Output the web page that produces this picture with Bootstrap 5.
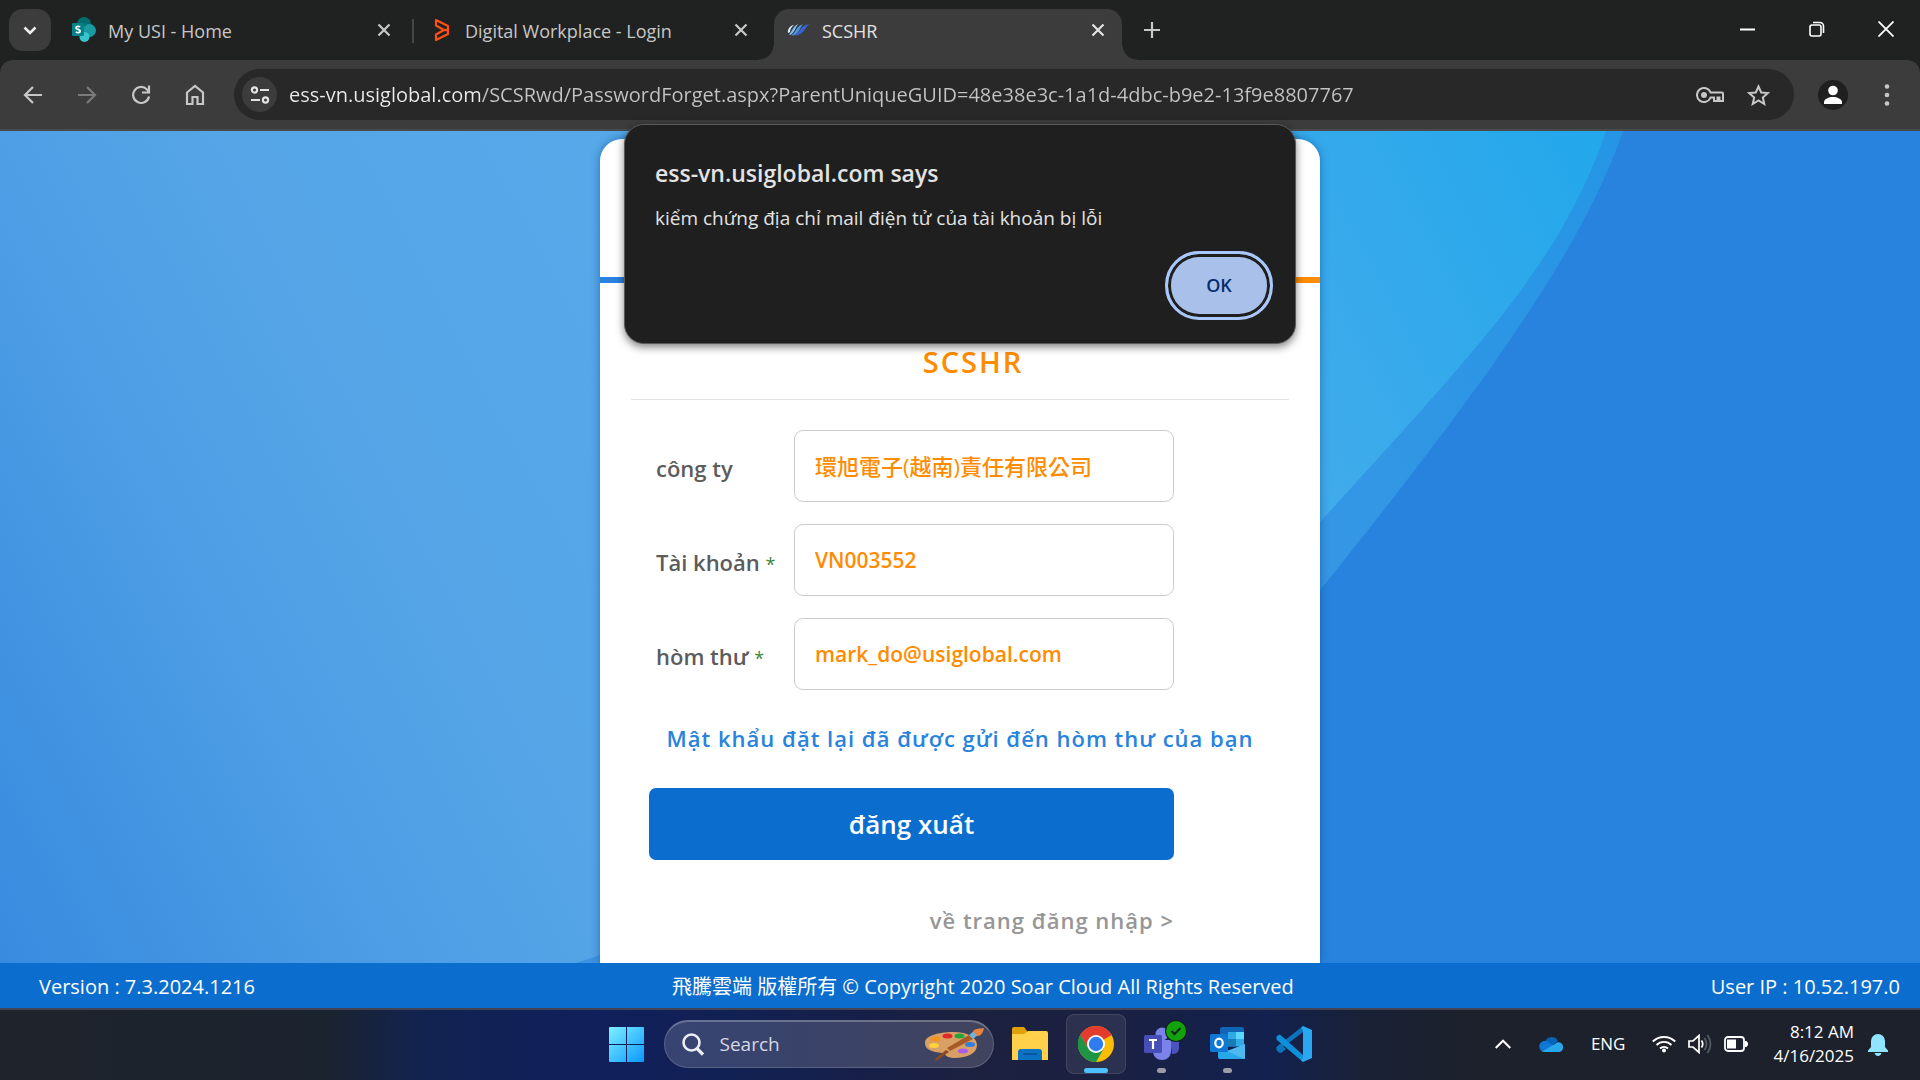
<!doctype html>
<html lang="vi">
<head>
<meta charset="utf-8">
<meta name="viewport" content="width=device-width, initial-scale=1">
<title>SCSHR</title>
<link href="https://cdn.jsdelivr.net/npm/bootstrap@5.3.0/dist/css/bootstrap.min.css" rel="stylesheet">
<style>
body{font-family:"Open Sans","Noto Sans","Noto Sans CJK TC",sans-serif;background:#202221;color:#fff}
button,input{font-family:inherit}
svg{display:block;flex:none}
.plain{background:none;border:0;padding:0;color:inherit;display:flex;align-items:center;justify-content:center;flex:none}
/* tab strip */
.strip{height:60px;padding-left:9px;color:#c7c7c7;font-size:18px}
.tab-menu{width:42px;height:42px;border-radius:14px;background:#3c3c3c;color:#eee;margin:9px 6px 9px 0}
.tab{flex:0 1 357px;min-width:0;height:42px;padding:0 18px 0 15px;gap:12px}
.tab.divided{border-right:3px solid transparent;padding-right:15px;position:relative}
.tab.divided::after{content:"";position:absolute;right:-3px;top:10px;width:2px;height:24px;background:#454746}
.tab-on{flex:0 1 348px;min-width:0;height:51px;margin-left:3px;padding:0 12px 9px;gap:12px;background:#3c3c3c;border-radius:15px 15px 0 0;color:#e3e3e3;position:relative}
.tab-on::before,.tab-on::after{content:"";position:absolute;bottom:0;width:15px;height:15px}
.tab-on::before{right:100%;background:radial-gradient(circle at 0 0,transparent 14px,#3c3c3c 15px)}
.tab-on::after{left:100%;background:radial-gradient(circle at 100% 0,transparent 14px,#3c3c3c 15px)}
.tab-text{flex:1;white-space:nowrap;overflow:hidden;line-height:26px;padding-top:2px}
.x{width:24px;height:24px}
.new-tab{width:30px;height:42px;margin-left:15px}
.win{width:69px;height:58px;color:#fff}
/* toolbar */
.tools{height:71px;background:#3c3c3c;border-bottom:2px solid #4a4a4a;border-radius:13px 13px 0 0;padding:0 6px;color:#c7c7c7}
.tool{width:54px;height:51px}
.omni{height:51px;background:#282828;border-radius:26px;margin:0 12px;padding:0 12px 0 8px}
.site{width:35px;height:35px;border-radius:50%;background:#3c3c3c;color:#e3e3e3;margin-right:12px}
.url{border:0;outline:0;padding:0;font-size:20px;height:40px;color:transparent;background:linear-gradient(90deg,#ececec 193px,#c4c4c4 193px);-webkit-background-clip:text;background-clip:text}
.omni-btn{width:48px;height:48px}
.avatar{width:30px;height:30px;border-radius:50%;background:#1f1f1f;color:#fff;overflow:hidden}
/* page */
.stage{background:#2883de;position:relative;overflow:hidden}
.scene{position:absolute;inset:0;width:100%;height:100%}
.panel{position:relative;width:720px;max-width:100%;margin-top:8px;background:#fff;border-radius:22px 22px 0 0;box-shadow:0 0 8px rgba(0,60,130,.5)}
.logo-area{height:138px}
.stripe{height:6px;background:linear-gradient(90deg,#2883de 50%,#ff8c00 50%)}
.panel-body{padding:0 31px}
.brand{padding:59px 0 17px 26px;border-bottom:1px solid #e1e1e1;font-size:29px;line-height:40px;font-weight:600;letter-spacing:2px;color:#ff8c00;margin:0 0 30px;text-align:center}
.fields{margin-left:18px;width:525px;max-width:100%}
.field{margin-bottom:22px}
.field label{width:145px;padding:4px 0 0 7px;font-size:22px;font-weight:600;color:#5c5c5c;white-space:nowrap}
.req{color:#3c8a3c;font-size:18px;font-weight:400}
.field input{height:72px;border:1px solid #ccc;border-radius:9px;padding:0 20px;font-size:21px;font-weight:600;color:#ff8c00;background:#fff}
.field input:lang(zh){font-size:22px;font-weight:500;padding-bottom:3px}
.notice{font-size:22px;line-height:30px;font-weight:600;letter-spacing:1px;color:#2883de;text-align:center;margin:33px 0 35px;white-space:nowrap}
.submit{height:72px;border:0;border-radius:7px;background:#0b6dcd;color:#fff;font-size:26px;font-weight:600}
.back{font-size:22px;line-height:30px;font-weight:600;letter-spacing:1px;color:#969696;text-decoration:none;margin:45px 0 20px}
.foot{height:45px;background:#0b6dcd;font-size:20px;padding:3px 20px 0 39px;white-space:nowrap}
/* alert */
.alert-box{position:absolute;z-index:5;top:124px;left:50%;transform:translateX(-50%);width:672px;max-width:100%;padding:33px 22px 23px 30px;background:#1f1f1f;border:1px solid #5a5a5a;border-radius:20px;box-shadow:0 3px 8px rgba(0,0,0,.5);color:#e3e3e3}
.alert-title{font-size:23px;line-height:30px;font-weight:600;margin:0 0 17px}
.alert-msg{font-size:19px;line-height:26px;margin:0 0 20px}
.ok{width:108px;height:69px;border-radius:34px;border:3px solid #a8c7fa;background:#a8c0ea;box-shadow:inset 0 0 0 3px #1f1f1f;color:#062e6f;font-size:18px;font-weight:600;padding:0}
/* taskbar */
.bar{height:72px;padding-bottom:2px;border-top:2px solid #434557;background:linear-gradient(90deg,#1f232c 0,#1b232e 17%,#122350 22%,#111f5c 31%,#122152 39%,#171f48 45%,#1d2140 51%,#1b2040 57%,#12214f 66%,#1a2136 71%,#1d212b 77%)}
.app{width:66px;height:60px;position:relative}
.app::after{content:"";position:absolute;bottom:1px;width:9px;height:5px;border-radius:3px;background:#9a9ca6}
.app.idle::after{content:none}
.app.current::before{content:"";position:absolute;inset:0 3px;border-radius:8px;background:rgba(255,255,255,.08);border:1px solid rgba(255,255,255,.1)}
.app.current::after{width:24px;background:#4cc2ff}
.app svg{position:relative;overflow:visible}
.find{width:330px;height:48px;border-radius:24px;background:rgba(255,255,255,.16);border:1px solid rgba(255,255,255,.16);border-top:2px solid rgba(255,255,255,.25);margin:0 3px 0 4px;padding:0 8px 0 17px;gap:16px}
.find input{background:none;border:0;outline:0;padding:0;width:100px;font-size:19px;color:#d5d8e2}
.find input::placeholder{color:#d5d8e2;opacity:1}
.tray{padding-right:32px;font-size:17px}
.lang{margin:0 27px 0 28px}
.status{gap:12px}
.clock{line-height:24px;text-align:right;white-space:nowrap;margin:0 14px 0 25px}
</style>
<script src="https://cdn.jsdelivr.net/npm/bootstrap@5.3.0/dist/js/bootstrap.bundle.min.js"></script>
</head>
<body class="min-vh-100 d-flex flex-column position-relative">
<header>
<div class="strip d-flex">
  <button class="plain tab-menu" aria-label="Search tabs"><svg width="16" height="16" viewBox="0 0 16 16" fill="none" stroke="currentColor" stroke-width="2.6"><path d="M2.5 5.5 8 11l5.500-5.500"/></svg></button>
  <div class="tab divided d-flex align-items-center align-self-center">
    <svg width="24" height="28" viewBox="0 0 24 28"><circle cx="12" cy="8" r="7" fill="#036c70"/><circle cx="17.500" cy="14.500" r="6.500" fill="#1a9ba1"/><circle cx="12.500" cy="21" r="5" fill="#37c6d0"/><rect y="7" width="12" height="13" rx="1" fill="#038387"/><path d="M8.200 10.800C5.500 9.700 3.700 10.600 4 12.100s4.200 1 4.200 2.900-2.600 2-4.400 1" fill="none" stroke="#fff" stroke-width="1.700"/></svg>
    <span class="tab-text">My USI - Home</span>
    <button class="plain x" aria-label="Close tab"><svg width="14" height="14" viewBox="0 0 14 14" stroke="currentColor" stroke-width="2.200"><path d="M1.500 1.500l11 11M12.500 1.500l-11 11"/></svg></button>
  </div>
  <div class="tab d-flex align-items-center align-self-center">
    <svg width="24" height="24" viewBox="0 0 24 24" fill="none" stroke="#fe5016" stroke-width="2.200" stroke-linejoin="round"><path d="M7 2l12 6v3.500L15 12l4 .5V16L7 22v-5.500L15 12 7 7.500z"/></svg>
    <span class="tab-text">Digital Workplace - Login</span>
    <button class="plain x" aria-label="Close tab"><svg width="14" height="14" viewBox="0 0 14 14" stroke="currentColor" stroke-width="2.200"><path d="M1.500 1.500l11 11M12.500 1.500l-11 11"/></svg></button>
  </div>
  <div class="tab-on d-flex align-items-center align-self-end">
    <svg width="24" height="24" viewBox="0 0 24 24"><path d="M2 15C1 11 5 7 8 7 5 9 4 12 4 14z" fill="#d7efff"/><path d="M3 16C5 16 6 9 12 6 9 11 8 15 4 17z" fill="#7cc0f0"/><path d="M5 17C10 16 9 9 17 6 13 11 13 16 7 17.500z" fill="#4a96e0"/><path d="M8 17.500C15 15 13 8 23 6 19 10 18 16 10 17.500z" fill="#3c62d8"/></svg>
    <span class="tab-text">SCSHR</span>
    <button class="plain x" aria-label="Close tab"><svg width="14" height="14" viewBox="0 0 14 14" stroke="currentColor" stroke-width="2.200"><path d="M1.500 1.500l11 11M12.500 1.500l-11 11"/></svg></button>
  </div>
  <button class="plain new-tab align-self-center" aria-label="New tab"><svg width="16" height="16" viewBox="0 0 16 16" stroke="currentColor" stroke-width="2.200"><path d="M8 0v16M0 8h16"/></svg></button>
  <div class="d-flex ms-auto">
    <button class="plain win" aria-label="Minimize"><svg width="15" height="15" viewBox="0 0 15 15"><path d="M0 6.500h15v2H0z" fill="#fff"/></svg></button>
    <button class="plain win" aria-label="Restore"><svg width="16" height="16" viewBox="0 0 16 16" fill="none" stroke="#fff" stroke-width="1.600"><rect x="1" y="4" width="11" height="11" rx="2"/><path d="M4 1.500h7a3.500 3.500 0 0 1 3.500 3.500v7"/></svg></button>
    <button class="plain win" aria-label="Close"><svg width="16" height="16" viewBox="0 0 16 16" stroke="#fff" stroke-width="1.800"><path d="M.5.5l15 15M15.500.5l-15 15"/></svg></button>
  </div>
</div>
<nav class="tools d-flex align-items-center">
  <button class="plain tool" aria-label="Back"><svg width="20" height="20" viewBox="0 0 20 20" fill="none" stroke="currentColor" stroke-width="2.200"><path d="M19 10H2.500M10 2l-8 8 8 8"/></svg></button>
  <button class="plain tool" aria-label="Forward"><svg width="20" height="20" viewBox="0 0 20 20" fill="none" stroke="#7b7b7b" stroke-width="2.200"><path d="M1 10h16.500M10 2l8 8-8 8"/></svg></button>
  <button class="plain tool" aria-label="Reload"><svg width="20" height="20" viewBox="0 0 20 20" fill="none" stroke="currentColor" stroke-width="2.200"><path d="M18 11.500A8 8 0 1 1 16 4.500l2 2M18 .5v7h-7"/></svg></button>
  <button class="plain tool" aria-label="Home"><svg width="20" height="22" viewBox="0 0 20 22" fill="none" stroke="currentColor" stroke-width="2.200"><path d="M2 8.500 10 2l8 6.500V20h-5.500v-7h-5v7H2z"/></svg></button>
  <div class="omni d-flex align-items-center flex-fill">
    <button class="plain site" aria-label="Site information"><svg width="20" height="18" viewBox="0 0 20 18" fill="none" stroke="currentColor" stroke-width="2.200"><circle cx="4.500" cy="4" r="2.600"/><path d="M10 4h9M1 14h9"/><circle cx="15.500" cy="14" r="2.600"/></svg></button>
    <input class="url flex-fill" type="text" aria-label="Address" value="ess-vn.usiglobal.com/SCSRwd/PasswordForget.aspx?ParentUniqueGUID=48e38e3c-1a1d-4dbc-b9e2-13f9e8807767">
    <button class="plain omni-btn" aria-label="Passwords"><svg width="28" height="16" viewBox="0 0 28 16" fill="none" stroke="currentColor" stroke-width="2"><path d="M14.500 5.500H26a1 1 0 0 1 1 1V14h-3.500v-3.500h-2V14H18v-3.500h-3.500A7 7 0 1 1 14.500 5.500z"/><circle cx="8" cy="8" r="3" fill="currentColor" stroke="none"/></svg></button>
    <button class="plain omni-btn" aria-label="Bookmark"><svg width="23" height="22" viewBox="0 0 23 22" fill="none" stroke="currentColor" stroke-width="2"><path d="M11.500 2.500l2.700 6 6.600.6-5 4.400 1.500 6.500-5.800-3.500L5.700 20l1.500-6.500-5-4.400 6.600-.6z"/></svg></button>
  </div>
  <button class="plain tool" aria-label="Profile"><span class="avatar"><svg width="30" height="30" viewBox="0 0 30 30" fill="#fff"><circle cx="15" cy="10.500" r="4.800"/><path d="M6 24v-2c0-3 5-5 9-5s9 2 9 5v2z"/></svg></span></button>
  <button class="plain tool" aria-label="Menu"><svg width="6" height="22" viewBox="0 0 6 22" fill="currentColor"><circle cx="3" cy="2.500" r="2.300"/><circle cx="3" cy="11" r="2.300"/><circle cx="3" cy="19.500" r="2.300"/></svg></button>
</nav>
</header>

<main class="stage flex-fill d-flex justify-content-center">
  <svg class="scene" viewBox="0 0 1920 832" preserveAspectRatio="none" aria-hidden="true">
    <defs><linearGradient id="sky" gradientUnits="userSpaceOnUse" x1="0" y1="830" x2="1600" y2="0"><stop offset="0" stop-color="#388bdf"/><stop offset=".2" stop-color="#4d9ee5"/><stop offset=".32" stop-color="#55a5e7"/><stop offset=".5" stop-color="#56a8e9"/><stop offset=".76" stop-color="#42abeb"/><stop offset="1" stop-color="#22a8eb"/></linearGradient></defs>
    <path d="M0 0H1623C1585 110 1500 235 1321 458 1100 700 900 800 800 832H0z" fill="url(#sky)" opacity=".5"/>
    <path d="M0 0H1606C1562 130 1480 215 1321 390 1100 600 850 740 576 832H0z" fill="url(#sky)"/>
  </svg>
  <section class="panel">
    <div class="logo-area"></div>
    <div class="stripe"></div>
    <form class="panel-body">
      <h1 class="brand">SCSHR</h1>
      <div class="fields">
        <div class="field d-flex align-items-center"><label for="company">công ty</label><input class="flex-fill" id="company" lang="zh-Hant" type="text" value="環旭電子(越南)責任有限公司"></div>
        <div class="field d-flex align-items-center"><label for="account">Tài khoản <span class="req">*</span></label><input class="flex-fill" id="account" type="text" value="VN003552"></div>
        <div class="field d-flex align-items-center mb-0"><label for="mail">hòm thư <span class="req">*</span></label><input class="flex-fill" id="mail" type="text" value="mark_do@usiglobal.com"></div>
      </div>
      <p class="notice">Mật khẩu đặt lại đã được gửi đến hòm thư của bạn</p>
      <div class="fields d-flex flex-column">
        <button class="submit" type="button">đăng xuất</button>
        <a class="back align-self-end" href="#">về trang đăng nhập &gt;</a>
      </div>
    </form>
  </section>
</main>

<footer class="foot d-flex align-items-center justify-content-between">
  <span>Version : 7.3.2024.1216</span>
  <span>飛騰雲端 版權所有 © Copyright 2020 Soar Cloud All Rights Reserved</span>
  <span>User IP : 10.52.197.0</span>
</footer>

<div class="alert-box" role="alertdialog" aria-labelledby="says">
  <h2 class="alert-title" id="says">ess-vn.usiglobal.com says</h2>
  <p class="alert-msg">kiểm chứng địa chỉ mail điện tử của tài khoản bị lỗi</p>
  <div class="d-flex justify-content-end"><button class="ok">OK</button></div>
</div>

<div class="bar d-flex align-items-center">
  <div class="col"></div>
  <button class="plain app idle" aria-label="Start"><svg width="35" height="35" viewBox="0 0 35 35"><defs><linearGradient id="win" x1="0" y1="0" x2="1" y2="1" ><stop offset="0" stop-color="#7df0ff"/><stop offset="1" stop-color="#0a98ff"/></linearGradient></defs><path d="M0 1a1 1 0 0 1 1-1h16v17H0zM18 0h16a1 1 0 0 1 1 1v16H18zM0 18h17v17H1a1 1 0 0 1-1-1zM18 18h17v16a1 1 0 0 1-1 1H18z" fill="url(#win)"/></svg></button>
  <div class="find d-flex align-items-center">
    <svg width="22" height="23" viewBox="0 0 22 23" fill="none" stroke="#eceef5" stroke-width="2.600"><circle cx="9.500" cy="9.500" r="8"/><path d="M15 15.500l6 6" stroke-width="3.200"/></svg>
    <input type="search" placeholder="Search" aria-label="Search">
    <svg class="ms-auto" width="62" height="34" viewBox="0 0 62 34"><path d="M27 4C44 3 54 9 54 17S45 30 31 30c-8 0-8-4-12-5C10 24 2 22 2 15S13 5 27 4z" fill="#d9a066"/><path d="M12 31 23 22l3 2-13 9z" fill="#8a4b22"/><ellipse cx="12.500" cy="11" rx="5" ry="2.500" fill="#f7941e"/><ellipse cx="24.500" cy="8" rx="5" ry="2.500" fill="#e02828"/><ellipse cx="36.500" cy="8" rx="5" ry="2.500" fill="#23a53a"/><ellipse cx="11" cy="17.500" rx="5" ry="2.500" fill="#ffd23c"/><ellipse cx="47" cy="16.500" rx="5" ry="2.500" fill="#2f7de0"/><ellipse cx="40" cy="23" rx="5" ry="2.500" fill="#a95cf0"/><path d="M24 20 46 7l4 4-23 12z" fill="#a65a28"/><path d="M46 7l5-4 4 4-5 4z" fill="#6fb2d8"/><path d="M50 3c3-3 7-2 11-3-1 5-3 8-7 8z" fill="#e8843c"/></svg>
  </div>
  <button class="plain app idle" aria-label="File Explorer"><svg width="36" height="34" viewBox="0 0 36 34"><path d="M0 2a2 2 0 0 1 2-2h10l3 4v5H0z" fill="#e0a008"/><path d="M0 7h12l4-3h18a2 2 0 0 1 2 2v27H0z" fill="#ffd04a"/><path d="M6 33v-8a3 3 0 0 1 3-3h18a3 3 0 0 1 3 3v8z" fill="#0a72c4"/><path d="M11 27h14" stroke="#084f94" stroke-width="1.600"/></svg></button>
  <button class="plain app current" aria-label="Chrome"><svg width="36" height="36" viewBox="0 0 36 36"><circle cx="18" cy="18" r="18" fill="#fbbc04"/><path d="M18 18 2.400 9A18 18 0 0 1 33.600 9z" fill="#e33b2e"/><path d="M18 9h15.600L18 4z" fill="#e33b2e"/><path d="M2.400 9A18 18 0 0 0 18 36l7.800-13.500L18 18 10.200 22.500z" fill="#1e9445"/><path d="M2.400 9 10.200 22.500 18 9z" fill="#e33b2e"/><path d="M2.400 9A18 18 0 0 0 2 26l8.200-3.500z" fill="#1e9445"/><circle cx="18" cy="18" r="9" fill="#fff"/><circle cx="18" cy="18" r="7.200" fill="#2f7bf0"/></svg></button>
  <button class="plain app" aria-label="Teams"><svg width="44" height="42" viewBox="0 0 44 42"><circle cx="22" cy="11" r="6.500" fill="#7b83eb"/><path d="M30 17h9v8c0 4-3 6-7 6z" fill="#4b53bc"/><path d="M13 17h18v11c0 12-18 12-18 0z" fill="#7b83eb"/><rect x="4" y="12" width="18" height="18" rx="1.500" fill="#464eb8"/><path d="M9 17h8M13 17v9" stroke="#fff" stroke-width="2.200"/><circle cx="36" cy="8" r="11" fill="#13211c"/><circle cx="36" cy="8" r="10" fill="#13a10e"/><path d="M31.500 8l3 3 6-6" fill="none" stroke="#10251a" stroke-width="2"/></svg></button>
  <button class="plain app" aria-label="Outlook"><svg width="36" height="34" viewBox="0 0 36 34"><path d="M10 2a2 2 0 0 1 2-2h20a2 2 0 0 1 2 2v18H10z" fill="#1066b5"/><path d="M18 5h8v7h-8z" fill="#32a9e7"/><path d="M26 5h8v7h-8z" fill="#58d9fd"/><path d="M26 12h8v7h-8z" fill="#32a9e7"/><path d="M18 12h8v7h-8z" fill="#167eb4"/><path d="M8 18l27 14H10a2 2 0 0 1-2-2z" fill="#28a8ea"/><path d="M35 17v14a1 1 0 0 1-1 1L17 24z" fill="#50b8f0"/><rect y="7" width="18" height="18" rx="1.500" fill="#0f78d4"/><ellipse cx="9" cy="16" rx="3.700" ry="4.300" fill="none" stroke="#fff" stroke-width="2.200"/></svg></button>
  <button class="plain app idle" aria-label="Visual Studio Code"><svg width="36" height="36" viewBox="0 0 36 36"><path d="M4 23.500 27 6V0L1 20.500c-2 2 1.500 7 4 5.500z" fill="#0b74bd"/><path d="M4.500 9 27 29v7L1 14c-2-2.500 1-6.500 3.500-5z" fill="#0d8fd9"/><path d="M1 21l3-3 6 5-4 3.500C3 28-1 23.500 1 21z" fill="#0b74bd"/><path d="M27 0l9 4v28l-9 4-2-2 2-2V4l-2-2z" fill="#29a8f2"/></svg></button>
  <div class="col">
  <div class="tray d-flex align-items-center justify-content-end">
    <button class="plain me-4" aria-label="Hidden icons"><svg width="20" height="10" viewBox="0 0 20 10" fill="none" stroke="#fff" stroke-width="2"><path d="M.7 9 8 1.700 15.300 9"/></svg></button>
    <svg width="24" height="16" viewBox="0 0 24 16"><path d="M6 6a7 7 0 0 1 13-1l-8 7z" fill="#0364b8"/><path d="M1 13C-2 7 5 3 9 6l8 5-11 5c-3 0-4-1-5-3z" fill="#0f78d4"/><path d="M3 15.500 16 8c4-4 9 0 8 4 0 2-2 4-4 4H6z" fill="#28a8ea"/></svg>
    <span class="lang">ENG</span>
    <div class="status d-flex align-items-center">
      <svg width="24" height="18" viewBox="0 0 24 18" fill="none" stroke="#fff" stroke-width="1.900"><path d="M.8 6.500a16 16 0 0 1 22.400 0M4.500 10a10.500 10.500 0 0 1 15 0M8 13.500a6 6 0 0 1 8 0"/><circle cx="12" cy="15.500" r="2" fill="#fff" stroke="none"/></svg>
      <svg width="24" height="20" viewBox="0 0 24 20" fill="none" stroke="#fff" stroke-width="1.700"><path d="M1 7h4l6-5.500v17L5 13H1z"/><path d="M13.500 6.500q2.500 3.500 0 7"/><path d="M16.500 4q4 6 0 12M19.500 1q6 9 0 18" stroke="#555a63"/></svg>
      <svg width="24" height="16" viewBox="0 0 24 16"><rect x="1" y="1" width="19" height="14" rx="3" fill="none" stroke="#fff" stroke-width="1.800"/><rect x="3" y="3.500" width="9" height="9" fill="#fff"/><path d="M21 5h1.500L24 7v2l-1.500 2H21z" fill="#fff"/></svg>
    </div>
    <div class="clock">8:12 AM<br>4/16/2025</div>
    <svg width="20" height="23" viewBox="0 0 20 23" fill="#8fe5ff"><path d="M3 8a7 7 0 0 1 14 0v6l3 3.500V19H0v-1.500L3 14zM6.500 20h7q-1 3-3.500 3t-3.500-3z"/></svg>
  </div>
  </div>
</div>
</body>
</html>
